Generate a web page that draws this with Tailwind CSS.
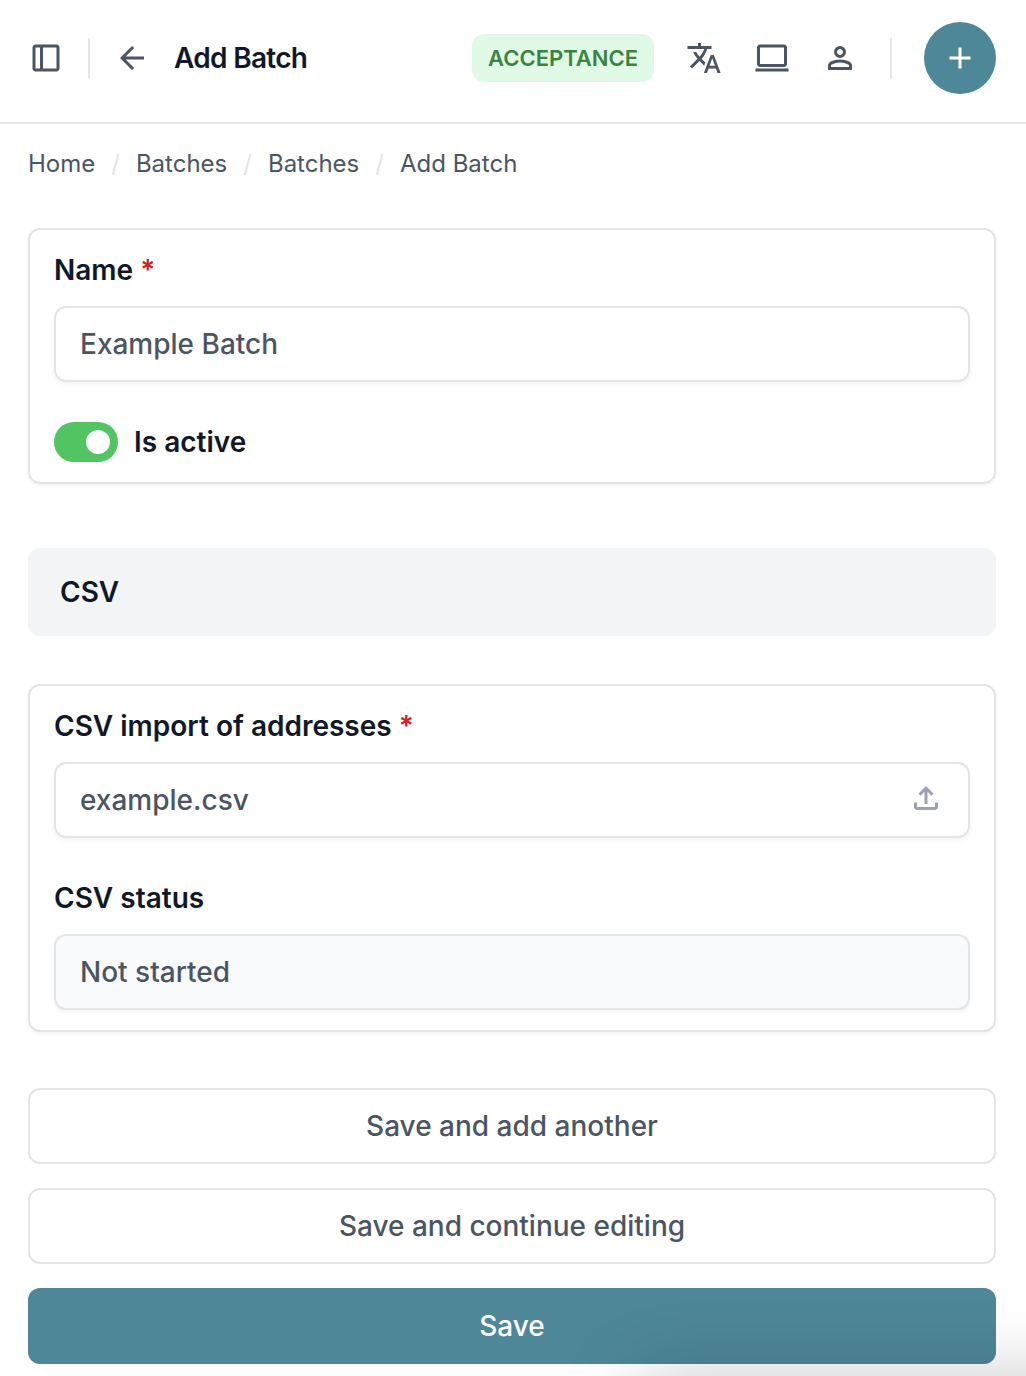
<!DOCTYPE html>
<html lang="en">
<head>
    <meta charset="UTF-8" />
    <meta name="viewport" content="width=device-width, initial-scale=1.0" />
    <title>Add Batch</title>
    <script src="https://cdn.jsdelivr.net/npm/@tailwindcss/browser@4"></script>
</head>

<body class="min-h-screen bg-white font-[Inter,sans-serif] text-[28px] leading-10 text-[#4b5563]">
    <header class="flex items-center justify-between h-[124px] pl-7 pr-[30px] pb-[6px] border-b-2 border-[#e4e4e9]">
        <div class="flex items-center gap-6">
            <button type="button" aria-label="Toggle sidebar">
                <svg class="size-9" viewBox="0 -960 960 960" fill="currentColor"><path d="M200-120q-33 0-56.5-23.5T120-200v-560q0-33 23.5-56.5T200-840h560q33 0 56.5 23.5T840-760v560q0 33-23.5 56.5T760-120H200Zm120-80v-560H200v560h120Zm80 0h360v-560H400v560Z" /></svg>
            </button>
            <div class="w-[2px] h-10 bg-[#e4e4e9]"></div>
            <a href="#" aria-label="Back">
                <svg class="size-9" viewBox="0 -960 960 960" fill="currentColor"><path d="m313-440 224 224-57 56-320-320 320-320 57 56-224 224h487v80H313Z" /></svg>
            </a>
            <h1 class="font-semibold tracking-tight text-[#111827]">Add Batch</h1>
        </div>
        <div class="flex items-center gap-8">
            <span class="flex items-center h-12 px-4 rounded-xl bg-[#e1fae6] text-[22px] font-semibold text-[#3a843f]">ACCEPTANCE</span>
            <button type="button" aria-label="Language">
                <svg class="size-9" viewBox="0 -960 960 960" fill="currentColor"><path d="m476-80 182-480h84L924-80h-84l-43-122H603L560-80h-84ZM160-200l-56-56 202-202q-35-35-63.5-80T190-640h84q20 39 40 68t48 58q33-33 68.5-92.5T484-720H40v-80h280v-80h80v80h280v80H564q-21 72-63 148t-83 116l96 98-30 82-122-125-202 201Zm468-72h144l-72-204-72 204Z" /></svg>
            </button>
            <button type="button" aria-label="Theme">
                <svg class="size-9" viewBox="0 -960 960 960" fill="currentColor"><path d="M40-120v-80h880v80H40Zm120-120q-33 0-56.5-23.5T80-320v-440q0-33 23.5-56.5T160-840h640q33 0 56.5 23.5T880-760v440q0 33-23.5 56.5T800-240H160Zm0-80h640v-440H160v440Z" /></svg>
            </button>
            <button type="button" aria-label="Account">
                <svg class="size-9" viewBox="0 -960 960 960" fill="currentColor"><path d="M480-480q-66 0-113-47t-47-113q0-66 47-113t113-47q66 0 113 47t47 113q0 66-47 113t-113 47ZM160-160v-112q0-34 17.5-62.5T224-378q62-31 126-46.5T480-440q66 0 130 15.5T736-378q29 15 46.5 43.5T800-272v112H160Zm80-80h480v-32q0-11-5.5-20T700-306q-54-27-109-40.5T480-360q-56 0-111 13.5T260-306q-9 5-14.5 14t-5.5 20v32Zm240-320q33 0 56.5-23.5T560-640q0-33-23.5-56.5T480-720q-33 0-56.5 23.5T400-640q0 33 23.5 56.5T480-560Z" /></svg>
            </button>
            <div class="w-[2px] h-10 bg-[#e4e4e9]"></div>
            <a href="#" aria-label="Add" class="flex items-center justify-center size-18 rounded-full bg-[#4e8798] text-white">
                <svg class="size-9" viewBox="0 -960 960 960" fill="currentColor"><path d="M440-440H200v-80h240v-240h80v240h240v80H520v240h-80v-240Z" /></svg>
            </a>
        </div>
    </header>

    <main class="pl-7 pr-[30px] pt-5 pb-3">
        <nav aria-label="Breadcrumb">
            <ol class="flex items-center gap-4 text-2xl leading-10">
                <li><a href="#">Home</a></li>
                <li class="text-[#e4e4e9]">/</li>
                <li><a href="#">Batches</a></li>
                <li class="text-[#e4e4e9]">/</li>
                <li><a href="#">Batches</a></li>
                <li class="text-[#e4e4e9]">/</li>
                <li>Add Batch</li>
            </ol>
        </nav>

        <form class="mt-11">
            <div class="px-6 py-5 border-2 border-[#e4e4e9] rounded-xl shadow-[0_2px_4px_rgba(0,0,0,0.05)]">
                <label for="name" class="block font-semibold text-[#111827]">Name <span class="text-[#d6211f]">*</span></label>
                <input type="text" id="name" value="Example Batch" class="block w-full h-19 mt-4 px-6 border-2 border-[#e4e4e9] rounded-xl shadow-[0_2px_4px_rgba(0,0,0,0.05)] font-medium" />
                <div class="flex items-center gap-4 mt-10">
                    <input type="checkbox" id="is-active" checked class="appearance-none w-16 h-10 p-2 rounded-full bg-gray-300 checked:bg-[#50c561] before:block before:size-6 before:rounded-full before:bg-white checked:before:ml-6" />
                    <label for="is-active" class="font-semibold text-[#111827]">Is active</label>
                </div>
            </div>

            <h2 class="mt-16 px-8 py-6 rounded-xl bg-[#f3f4f6] font-semibold text-[#111827]">CSV</h2>

            <div class="mt-12 px-6 py-5 border-2 border-[#e4e4e9] rounded-xl shadow-[0_2px_4px_rgba(0,0,0,0.05)]">
                <label for="csv-file" class="block font-semibold text-[#111827]">CSV import of addresses <span class="text-[#d6211f]">*</span></label>
                <div class="flex items-center h-19 mt-4 px-6 border-2 border-[#e4e4e9] rounded-xl shadow-[0_2px_4px_rgba(0,0,0,0.05)]">
                    <input type="text" id="csv-file" value="example.csv" readonly class="flex-1 min-w-0 font-medium" />
                    <button type="button" aria-label="Choose file" class="pb-1 text-[#9ca3af]">
                        <svg class="size-9" viewBox="0 -960 960 960" fill="currentColor"><path d="M440-320v-326L336-542l-56-58 200-200 200 200-56 58-104-104v326h-80ZM240-160q-33 0-56.5-23.5T160-240v-120h80v120h480v-120h80v120q0 33-23.5 56.5T720-160H240Z" /></svg>
                    </button>
                </div>
                <label for="csv-status" class="block mt-10 font-semibold text-[#111827]">CSV status</label>
                <input type="text" id="csv-status" value="Not started" readonly class="block w-full h-19 mt-4 px-6 border-2 border-[#e4e4e9] rounded-xl bg-[#f9fafb] shadow-[0_2px_4px_rgba(0,0,0,0.05)] font-medium" />
            </div>

            <div class="flex flex-col gap-6 mt-14">
                <button type="submit" class="h-19 border-2 border-[#e4e4e9] rounded-xl font-medium">Save and add another</button>
                <button type="submit" class="h-19 border-2 border-[#e4e4e9] rounded-xl font-medium">Save and continue editing</button>
                <button type="submit" class="h-19 rounded-xl bg-[#4e8798] font-medium text-white">Save</button>
            </div>
        </form>
    </main>

    <!-- soft shade in the bottom right corner -->
    <div class="fixed top-full left-5/8 -right-24 h-24 mt-2 pointer-events-none shadow-[0_0_80px_rgba(0,0,0,0.25)]"></div>
</body>
</html>
